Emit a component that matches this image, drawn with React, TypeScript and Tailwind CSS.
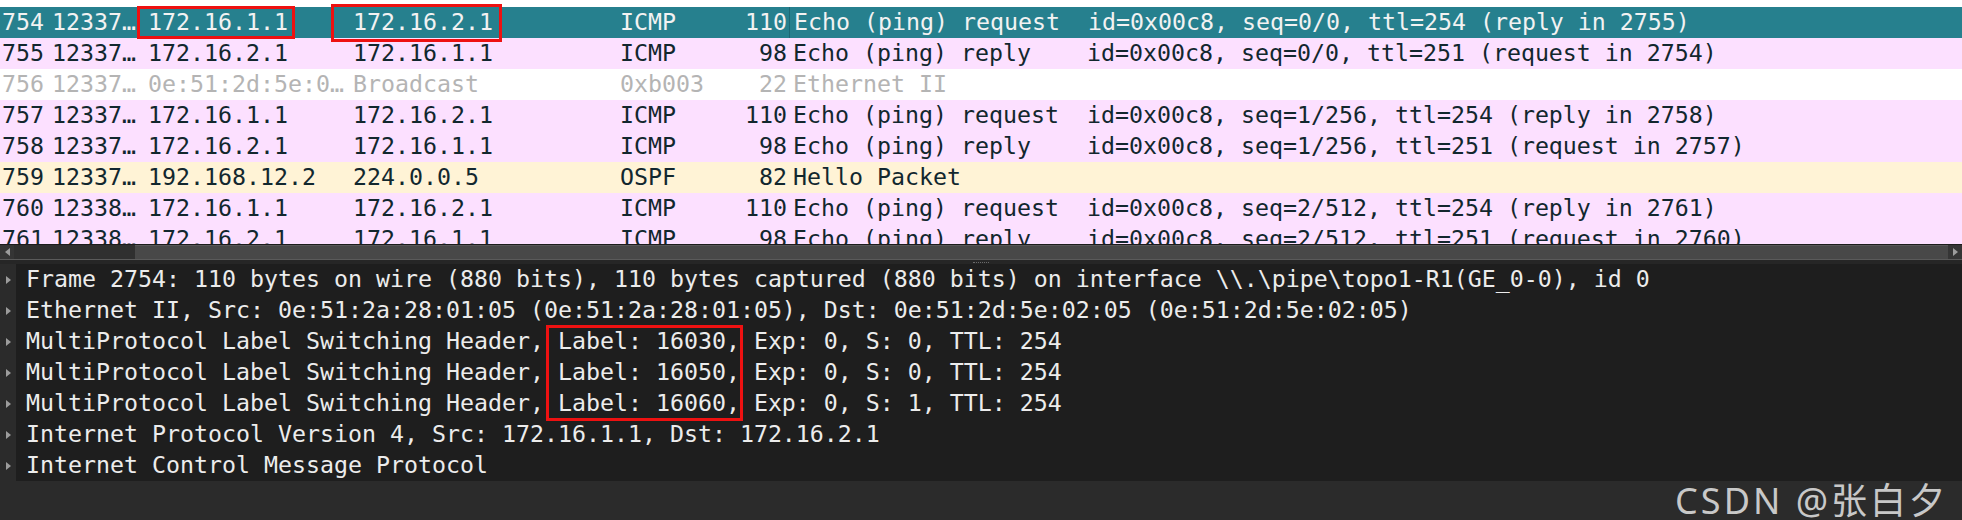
import React from 'react';

type Kind = 'plain' | 'sel' | 'icmp' | 'ospf';

type Packet = {
  no: string;
  time: string;
  src: string;
  dst: string;
  proto: string;
  len: string;
  info: string;
  kind: Kind;
};

const packets: Packet[] = [
  { no: '753', time: '12337…', src: '0e:51:2d:5e:0…', dst: 'Broadcast', proto: '0xb003', len: '22', info: 'Ethernet II', kind: 'plain' },
  { no: '754', time: '12337…', src: '172.16.1.1', dst: '172.16.2.1', proto: 'ICMP', len: '110', info: 'Echo (ping) request  id=0x00c8, seq=0/0, ttl=254 (reply in 2755)', kind: 'sel' },
  { no: '755', time: '12337…', src: '172.16.2.1', dst: '172.16.1.1', proto: 'ICMP', len: '98', info: 'Echo (ping) reply    id=0x00c8, seq=0/0, ttl=251 (request in 2754)', kind: 'icmp' },
  { no: '756', time: '12337…', src: '0e:51:2d:5e:0…', dst: 'Broadcast', proto: '0xb003', len: '22', info: 'Ethernet II', kind: 'plain' },
  { no: '757', time: '12337…', src: '172.16.1.1', dst: '172.16.2.1', proto: 'ICMP', len: '110', info: 'Echo (ping) request  id=0x00c8, seq=1/256, ttl=254 (reply in 2758)', kind: 'icmp' },
  { no: '758', time: '12337…', src: '172.16.2.1', dst: '172.16.1.1', proto: 'ICMP', len: '98', info: 'Echo (ping) reply    id=0x00c8, seq=1/256, ttl=251 (request in 2757)', kind: 'icmp' },
  { no: '759', time: '12337…', src: '192.168.12.2', dst: '224.0.0.5', proto: 'OSPF', len: '82', info: 'Hello Packet', kind: 'ospf' },
  { no: '760', time: '12338…', src: '172.16.1.1', dst: '172.16.2.1', proto: 'ICMP', len: '110', info: 'Echo (ping) request  id=0x00c8, seq=2/512, ttl=254 (reply in 2761)', kind: 'icmp' },
  { no: '761', time: '12338…', src: '172.16.2.1', dst: '172.16.1.1', proto: 'ICMP', len: '98', info: 'Echo (ping) reply    id=0x00c8, seq=2/512, ttl=251 (request in 2760)', kind: 'icmp' },
];

const rowStyle: Record<Kind, string> = {
  plain: 'bg-white text-[#b4b4b4]',
  sel: 'bg-[#26808e] text-[#f2f2f2]',
  icmp: 'bg-[#fce0ff] text-[#12272e]',
  ospf: 'bg-[#fff3d6] text-[#12272e]',
};

const details = [
  'Frame 2754: 110 bytes on wire (880 bits), 110 bytes captured (880 bits) on interface \\\\.\\pipe\\topo1-R1(GE_0-0), id 0',
  'Ethernet II, Src: 0e:51:2a:28:01:05 (0e:51:2a:28:01:05), Dst: 0e:51:2d:5e:02:05 (0e:51:2d:5e:02:05)',
  'MultiProtocol Label Switching Header, Label: 16030, Exp: 0, S: 0, TTL: 254',
  'MultiProtocol Label Switching Header, Label: 16050, Exp: 0, S: 0, TTL: 254',
  'MultiProtocol Label Switching Header, Label: 16060, Exp: 0, S: 1, TTL: 254',
  'Internet Protocol Version 4, Src: 172.16.1.1, Dst: 172.16.2.1',
  'Internet Control Message Protocol',
];

const mono = "font-['DejaVu_Sans_Mono',monospace] text-[23.25px]";

const PacketRow = ({ p }: { p: Packet }) => (
  <div className={`grid grid-cols-[48px_96px_205px_267px_90px_83px_1fr] h-[31px] items-center whitespace-pre ${rowStyle[p.kind]}`}>
    <div className="text-right pr-[4px] overflow-hidden">{p.no}</div>
    <div className="pl-[4px] overflow-hidden">{p.time}</div>
    <div className="pl-[4px] overflow-hidden">{p.src}</div>
    <div className="pl-[4px] overflow-hidden">{p.dst}</div>
    <div className="pl-[4px] overflow-hidden">{p.proto}</div>
    <div className="text-right pr-[2px] overflow-hidden">{p.len}</div>
    <div className={`pl-[4px] h-full flex items-center overflow-hidden ${p.kind === 'sel' ? 'border-l border-[#1d6874]' : ''}`}>{p.info}</div>
  </div>
);

const Arrow = ({ dir }: { dir: 'left' | 'right' }) => (
  <svg width="5" height="8" viewBox="0 0 5 8">
    <path d={dir === 'right' ? 'M0 0 L5 4 L0 8 Z' : 'M5 0 L0 4 L5 8 Z'} fill="#9c9c9c" />
  </svg>
);

export default function App() {
  return (
    <div className={`relative w-[1962px] h-[520px] overflow-hidden bg-[#2b2b2b] ${mono}`}>
      {/* packet list */}
      <div className="h-[244px] overflow-hidden bg-white">
        <div className="-mt-[24px]">
          {packets.map((p) => (
            <PacketRow key={p.no} p={p} />
          ))}
        </div>
      </div>

      {/* horizontal scrollbar */}
      <div className="h-[15px] flex bg-[#2f2f2f] border-t border-[#1c1c1c]">
        <div className="w-[14px] flex items-center justify-center bg-[#353535]">
          <Arrow dir="left" />
        </div>
        <div className="flex-1 pl-[121px]">
          <div className="h-full bg-[#484848] border-t border-[#585858]" />
        </div>
        <div className="w-[14px] flex items-center justify-center bg-[#353535]">
          <Arrow dir="right" />
        </div>
      </div>

      {/* splitter */}
      <div className="h-[5px] bg-[#262626] border-t border-[#5a5a5a] flex justify-center items-center">
        <div className="w-[16px] h-[1px] border-t border-dotted border-[#6a6a6a]" />
      </div>

      {/* packet details */}
      <div className="flex">
        <div className="w-[16px] bg-[#2b2b2b]">
          {details.map((d) => (
            <div key={d} className="h-[31px] flex items-center pl-[6px]">
              <Arrow dir="right" />
            </div>
          ))}
        </div>
        <div className="flex-1 bg-[#1e1e1e] text-[#ececec]">
          {details.map((d) => (
            <div key={d} className="h-[31px] flex items-center pl-[10px] whitespace-pre">
              {d}
            </div>
          ))}
        </div>
      </div>

      {/* annotation boxes */}
      <div className="absolute left-[137px] top-[6px] w-[158px] h-[33px] border-[3px] border-[#ee1111]" />
      <div className="absolute left-[331px] top-[4px] w-[171px] h-[38px] border-[3px] border-[#ee1111]" />
      <div className="absolute left-[546px] top-[325px] w-[197px] h-[96px] border-[3px] border-[#ee1111]" />

      {/* watermark */}
      <div className="absolute right-[14px] bottom-[1px] font-['Noto_Sans','Noto_Sans_CJK_SC',sans-serif] text-[36px] tracking-[3px] leading-none text-[#c8c8c8]">
        CSDN @张白夕
      </div>
    </div>
  );
}
